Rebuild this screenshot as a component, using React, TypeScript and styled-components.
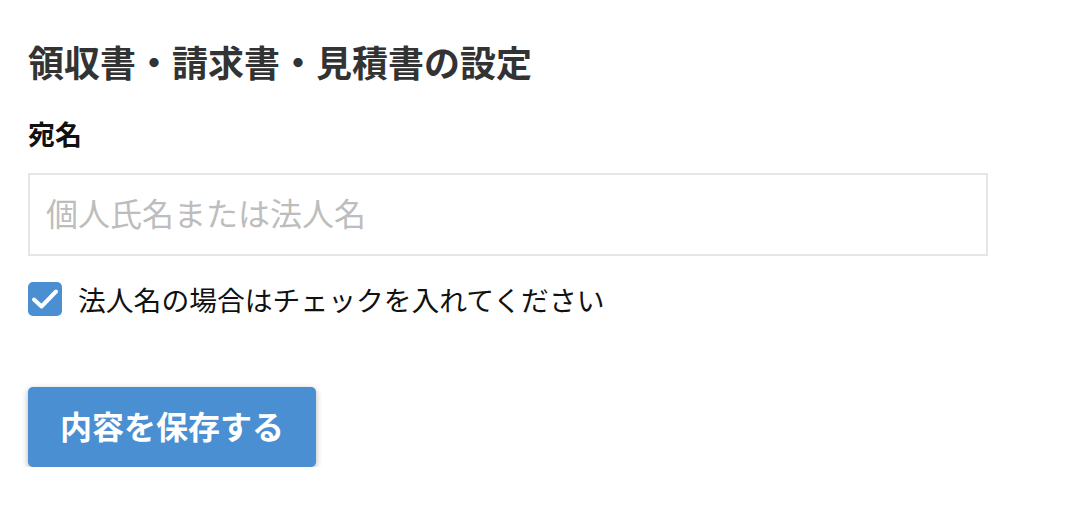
import React, { useState } from "react";
import styled, { createGlobalStyle } from "styled-components";

const Global = createGlobalStyle`
  html, body { margin: 0; padding: 0; background: #fff; }
  body { font-family: "Noto Sans CJK JP", "Noto Sans", sans-serif; }
  * { box-sizing: border-box; }
`;

const Page = styled.div`
  padding: 34px 28px 0 28px;
  display: flex;
  flex-direction: column;
  width: 1082px;
`;

const Title = styled.h1`
  margin: 0;
  font-size: 36px;
  line-height: 54px;
  font-weight: 700;
  color: #333;
`;

const Label = styled.label`
  margin-top: 26px;
  font-size: 27px;
  line-height: 40px;
  font-weight: 700;
  color: #111;
`;

const Input = styled.input`
  margin-top: 19px;
  width: 960px;
  height: 83px;
  border: 2px solid #e6e6e6;
  border-radius: 0;
  padding: 0 16px 6px 16px;
  font-family: inherit;
  font-size: 32px;
  color: #333;
  outline: none;
  &::placeholder { color: #bdbdbd; }
`;

const CheckRow = styled.label`
  margin-top: 23px;
  display: flex;
  align-items: center;
  gap: 16px;
  font-size: 27.8px;
  line-height: 40px;
  color: #111;
  cursor: pointer;
`;

const Box = styled.span<{ $checked: boolean }>`
  width: 34px;
  height: 34px;
  border-radius: 5px;
  background: ${(p) => (p.$checked ? "#4a8fd1" : "#fff")};
  border: ${(p) => (p.$checked ? "none" : "2px solid #ccc")};
  display: flex;
  align-items: center;
  justify-content: center;
  flex: none;
`;

const HiddenInput = styled.input`
  display: none;
`;

const Button = styled.button`
  margin-top: 68px;
  align-self: flex-start;
  width: 288px;
  height: 80px;
  padding: 0 0 5px 0;
  border: none;
  border-radius: 5px;
  background: #4a8fd1;
  color: #fff;
  font-family: inherit;
  font-size: 32px;
  font-weight: 700;
  box-shadow: 0 2px 6px rgba(0, 0, 0, 0.3);
  cursor: pointer;
`;

export default function App() {
  const [checked, setChecked] = useState(true);
  return (
    <>
      <Global />
      <Page>
        <Title>領収書・請求書・見積書の設定</Title>
        <Label htmlFor="name">宛名</Label>
        <Input id="name" placeholder="個人氏名または法人名" />
        <CheckRow>
          <HiddenInput type="checkbox" checked={checked} onChange={() => setChecked(!checked)} />
          <Box $checked={checked}>
            {checked && (
              <svg width="30" height="30" viewBox="0 0 30 30">
                <path d="M4 15.5 L11.5 22.5 L26 7.5" fill="none" stroke="#fff" strokeWidth="4" strokeLinecap="round" strokeLinejoin="round" />
              </svg>
            )}
          </Box>
          法人名の場合はチェックを入れてください
        </CheckRow>
        <Button>内容を保存する</Button>
      </Page>
    </>
  );
}
